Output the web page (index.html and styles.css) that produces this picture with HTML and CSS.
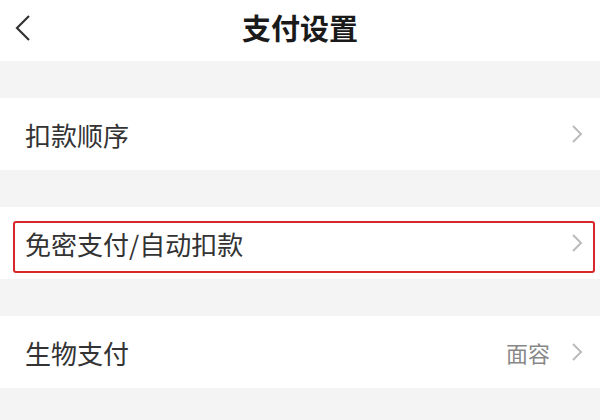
FILE: index.html
```html
<!DOCTYPE html>
<html lang="zh-CN">

<head>
    <meta charset="UTF-8">
    <meta name="viewport" content="width=device-width, initial-scale=1.0">
    <title>支付设置</title>
    <link rel="stylesheet" href="styles.css">
</head>

<body>
    <!-- 顶部导航 -->
    <div class="nav-bar">
        <svg class="back-icon" width="18" height="28" viewBox="0 0 18 28">
            <polyline points="15,2 3,14 15,26" fill="none" stroke="#333" stroke-width="2.2" />
        </svg>
        <h1 class="nav-title">支付设置</h1>
    </div>

    <div class="gap"></div>

    <div class="cell">
        <span class="cell-label">扣款顺序</span>
        <div class="cell-right">
            <svg class="arrow" width="13" height="20" viewBox="0 0 13 20">
                <polyline points="2,2 10,10 2,18" fill="none" stroke="#bbb" stroke-width="2" />
            </svg>
        </div>
    </div>

    <div class="gap"></div>

    <div class="cell cell-marked">
        <span class="cell-label">免密支付/自动扣款</span>
        <div class="cell-right">
            <svg class="arrow" width="13" height="20" viewBox="0 0 13 20">
                <polyline points="2,2 10,10 2,18" fill="none" stroke="#bbb" stroke-width="2" />
            </svg>
        </div>
        <!-- 红框标注 -->
        <div class="mark-box"></div>
    </div>

    <div class="gap"></div>

    <div class="cell">
        <span class="cell-label">生物支付</span>
        <div class="cell-right">
            <span class="cell-value">面容</span>
            <svg class="arrow" width="13" height="20" viewBox="0 0 13 20">
                <polyline points="2,2 10,10 2,18" fill="none" stroke="#bbb" stroke-width="2" />
            </svg>
        </div>
    </div>
</body>

</html>
```

FILE: styles.css
```css
/* 页面基础样式 */
body {
    margin: 0;
    background-color: #f4f4f4;
    font-family: "Noto Sans CJK SC", "Noto Sans", sans-serif;
    color: #333;
}

.nav-bar {
    height: 61px;
    background-color: #fff;
    display: flex;
    align-items: center;
    justify-content: center;
    position: relative;
}

.back-icon {
    position: absolute;
    left: 14px;
    top: 14px;
}

.nav-title {
    margin: 0;
    font-size: 29px;
    font-weight: bold;
    color: #1a1a1a;
    line-height: 1;
    padding-bottom: 6px;
}

.gap {
    height: 37px;
}

.cell {
    height: 72px;
    background-color: #fff;
    display: flex;
    align-items: center;
    justify-content: space-between;
    padding: 0 16px 0 25px;
    position: relative;
}

.cell-label {
    font-size: 26px;
    color: #333;
}

.cell-right {
    display: flex;
    align-items: center;
    gap: 21px;
}

.cell-value {
    font-size: 22px;
    color: #888;
}

.arrow {
    display: block;
}

/* 标注红框 */
.mark-box {
    position: absolute;
    left: 13px;
    right: 5px;
    top: 14px;
    bottom: 6px;
    border: 2px solid #d6282b;
    border-radius: 3px;
}
```
